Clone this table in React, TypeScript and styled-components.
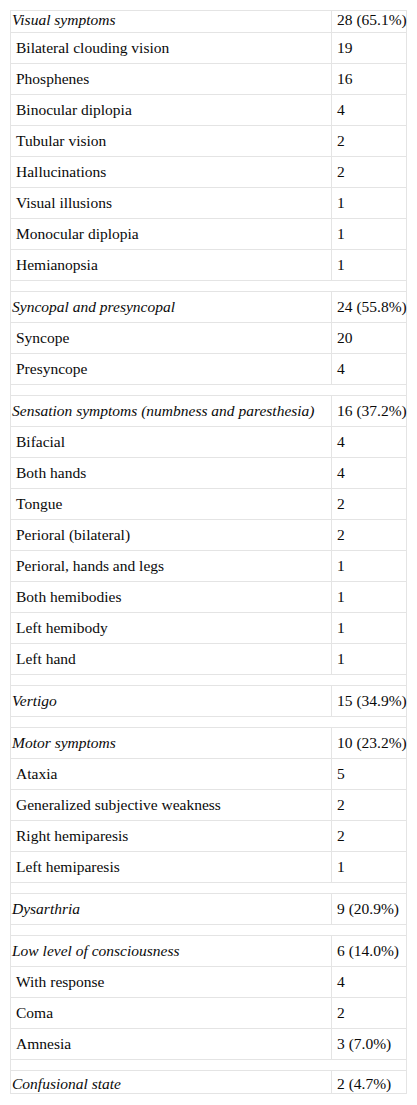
import React from 'react';
import styled, { createGlobalStyle } from 'styled-components';

const GlobalStyle = createGlobalStyle`
  body {
    margin: 0;
    background: #ffffff;
    font-family: "Liberation Serif", "Times New Roman", Times, serif;
    color: #0a0a0a;
  }
`;

const Page = styled.div`
  padding: 10px 10px 0 10px;
`;

const Table = styled.table`
  width: 397px;
  border-collapse: collapse;
  table-layout: fixed;
  font-family: "Liberation Serif", "Times New Roman", Times, serif;
  font-size: 15.5px;
  line-height: 18px;
  color: #0a0a0a;
`;

const Row = styled.tr<{ $height?: number }>`
  height: ${props => props.$height ?? 31}px;
`;

const LabelCell = styled.td<{ $sub?: boolean; $align?: string }>`
  width: 319px;
  border: 1px solid #e4e4e4;
  padding: 0 0 0 ${props => (props.$sub ? 5 : 1)}px;
  font-style: ${props => (props.$sub ? 'normal' : 'italic')};
  vertical-align: ${props => props.$align ?? 'middle'};
  white-space: nowrap;
`;

const ValueCell = styled.td<{ $align?: string }>`
  border: 1px solid #e4e4e4;
  padding: 0 0 0 5px;
  vertical-align: ${props => props.$align ?? 'middle'};
  white-space: nowrap;
`;

const Spacer = styled.td`
  border: 1px solid #e4e4e4;
  padding: 0;
  height: 10px;
`;

type Group = { title: string; total: string; items: [string, string][] };

const groups: Group[] = [
  {
    title: 'Visual symptoms',
    total: '28 (65.1%)',
    items: [
      ['Bilateral clouding vision', '19'],
      ['Phosphenes', '16'],
      ['Binocular diplopia', '4'],
      ['Tubular vision', '2'],
      ['Hallucinations', '2'],
      ['Visual illusions', '1'],
      ['Monocular diplopia', '1'],
      ['Hemianopsia', '1'],
    ],
  },
  {
    title: 'Syncopal and presyncopal',
    total: '24 (55.8%)',
    items: [
      ['Syncope', '20'],
      ['Presyncope', '4'],
    ],
  },
  {
    title: 'Sensation symptoms (numbness and paresthesia)',
    total: '16 (37.2%)',
    items: [
      ['Bifacial', '4'],
      ['Both hands', '4'],
      ['Tongue', '2'],
      ['Perioral (bilateral)', '2'],
      ['Perioral, hands and legs', '1'],
      ['Both hemibodies', '1'],
      ['Left hemibody', '1'],
      ['Left hand', '1'],
    ],
  },
  { title: 'Vertigo', total: '15 (34.9%)', items: [] },
  {
    title: 'Motor symptoms',
    total: '10 (23.2%)',
    items: [
      ['Ataxia', '5'],
      ['Generalized subjective weakness', '2'],
      ['Right hemiparesis', '2'],
      ['Left hemiparesis', '1'],
    ],
  },
  { title: 'Dysarthria', total: '9 (20.9%)', items: [] },
  {
    title: 'Low level of consciousness',
    total: '6 (14.0%)',
    items: [
      ['With response', '4'],
      ['Coma', '2'],
      ['Amnesia', '3 (7.0%)'],
    ],
  },
  { title: 'Confusional state', total: '2 (4.7%)', items: [] },
];

const App: React.FC = () => {
  const last = groups.length - 1;
  return (
    <Page>
      <GlobalStyle />
      <Table>
        <tbody>
          {groups.map((g, i) => {
            // first and last rows are clipped in the source, text hugs the edge
            const height = i === 0 ? 22 : i === last ? 23 : 31;
            const align = i === 0 ? 'top' : i === last ? 'bottom' : 'middle';
            return (
              <React.Fragment key={g.title}>
                {i > 0 && (
                  <tr>
                    <Spacer colSpan={2} />
                  </tr>
                )}
                <Row $height={height}>
                  <LabelCell $align={align}>{g.title}</LabelCell>
                  <ValueCell $align={align}>{g.total}</ValueCell>
                </Row>
                {g.items.map(([label, value]) => (
                  <Row key={label}>
                    <LabelCell $sub>{label}</LabelCell>
                    <ValueCell>{value}</ValueCell>
                  </Row>
                ))}
              </React.Fragment>
            );
          })}
        </tbody>
      </Table>
    </Page>
  );
};

export default App;
